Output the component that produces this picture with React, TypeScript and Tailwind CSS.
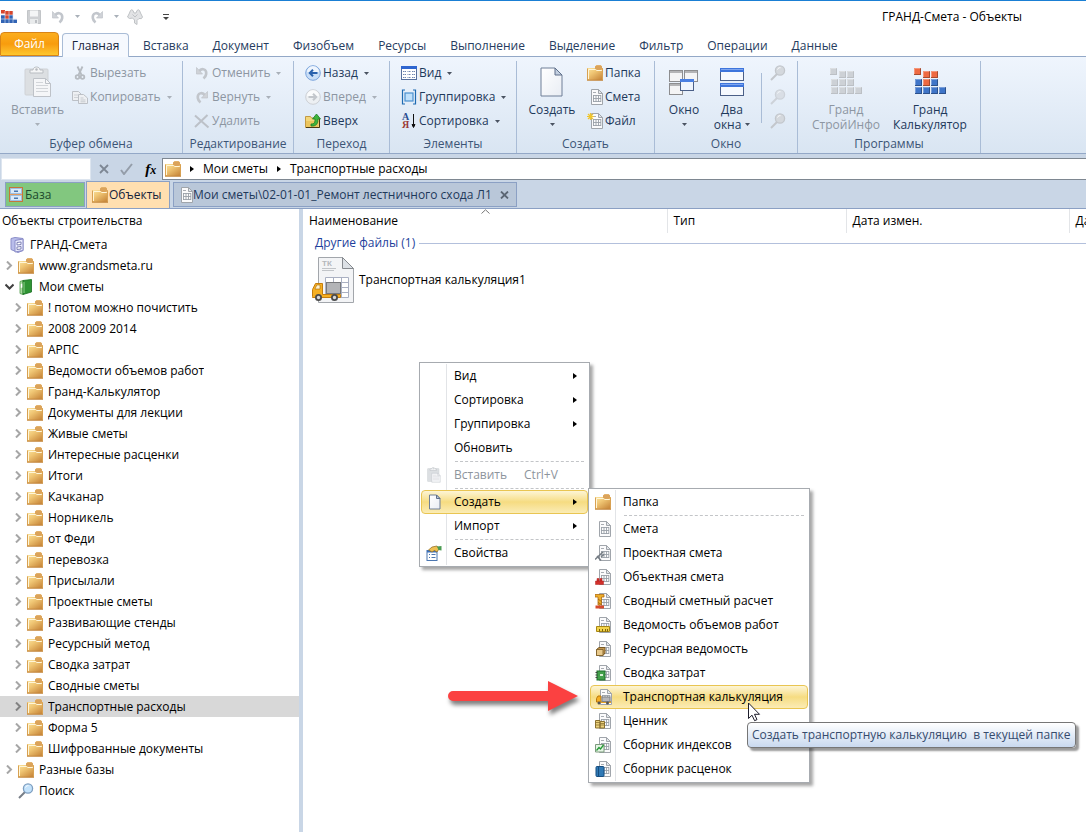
import { useState } from "react";
import type { ReactNode } from "react";

interface IconProps {
    muted?: boolean;
}

interface MenuEntry {
    label: string;
    icon?: ReactNode;
    shortcut?: string;
    submenu?: boolean;
    disabled?: boolean;
    active?: boolean;
    separatorBefore?: boolean;
}

/* ---------- icons ---------- */

const FolderIcon = () => (
    <svg className="shrink-0" width="16" height="16" viewBox="0 0 16 16">
        <defs>
            <linearGradient id="folderFill" x1="0" y1="0" x2="0.7" y2="1">
                <stop offset="0" stopColor="#fdeeb0" />
                <stop offset="0.5" stopColor="#f0c674" />
                <stop offset="1" stopColor="#cb8c3f" />
            </linearGradient>
        </defs>
        <path d="M0 3h8V1.500L9.500.3h4.200L15 1.500V3h1v12.500H0z" fill="url(#folderFill)" />
        <path d="M8 3.500V1.500L9.500.3h4.200L15 1.500v2L13.500 5h-4z" fill="#dba35a" />
        <path d="M1.500 14V4.500h7L9.800 5.500h5" fill="none" stroke="#fff6d8" />
        <path d="M.5 15V3.500M15.500 15V3.500" stroke="#d8a152" />
        <path d="M0 15.200h16" stroke="#bf8239" strokeWidth=".8" />
    </svg>
);

const SheetIcon = ({ children }: { children?: ReactNode }) => (
    <svg className="shrink-0" width="16" height="16" viewBox="0 0 16 16">
        <path d="M4.500.5h7l4 4v11h-11z" fill="#fbfbfc" stroke="#a0a5ab" />
        <path d="M11.500.5v4h4z" fill="#e3e6ea" stroke="#a0a5ab" />
        <path d="M6 3.500h3" stroke="#a9adb3" />
        <path d="M6 6.500h8M6 9.500h8M6 12.500h8M6.500 6v7M9 6v7M11.500 6v7M13.800 6v7" stroke="#9aa0a8" strokeWidth=".9" fill="none" />
        {children}
    </svg>
);

const PageIcon = ({ large }: { large?: boolean }) => (
    <svg className="shrink-0" width={large ? 24 : 12} height={large ? 32 : 16} viewBox="0 0 24 32">
        <defs>
            <linearGradient id="pageFill" x1="0" y1="0" x2="1" y2="1">
                <stop offset="0" stopColor="#ffffff" />
                <stop offset="1" stopColor="#e9edf4" />
            </linearGradient>
        </defs>
        <path d="M1 2h14l7 7v21H1z" fill="url(#pageFill)" stroke="#6f7f97" strokeWidth={large ? 1 : 2} />
        <path d="M15 2v7h7z" fill="#c3cfe0" stroke="#5e6f8a" strokeWidth={large ? 1 : 2} />
    </svg>
);

const PasteIcon = ({ large }: { large?: boolean }) => (
    <svg className="shrink-0" width={large ? 28 : 16} height={large ? 32 : 16} viewBox="0 0 28 32">
        <rect x="1" y="3" width="23" height="26" rx="1" fill="#dcdfe2" stroke="#cfd2d6" />
        <path d="M6 7V4h3c0-4 7-4 7 0h3v3z" fill="#f4f5f6" stroke="#b9bdc2" />
        <circle cx="12.500" cy="3.500" r="1.200" fill="#b4b8bd" />
        <path d="M9.500 12.500h12l5 5V30.500h-17z" fill="#f5f6f8" stroke="#bec2c8" />
        <path d="M21.500 12.500v5h5" fill="none" stroke="#bec2c8" />
        <path d="M12 19.500h12M12 22.500h12M12 25.500h12M12 16.500h7" stroke="#d2d5d9" />
    </svg>
);

const ScissorsIcon = () => (
    <svg className="shrink-0" width="16" height="16" viewBox="0 0 16 16" fill="none" stroke="#b6bbc1" strokeWidth="1.800">
        <path d="M5.500 1.500 9.500 10M10.500 1.500 6.500 10" />
        <circle cx="5.500" cy="12" r="1.800" />
        <circle cx="10.500" cy="12" r="1.800" />
    </svg>
);

const CopyIcon = () => (
    <svg className="shrink-0" width="16" height="16" viewBox="0 0 16 16" fill="#eef0f3" stroke="#bcc0c6">
        <path d="M.5 2.500h6l3 3v6h-9z" />
        <path d="M2 6h4M2 8.500h4" stroke="#cfd2d6" />
        <path d="M6.500 5.500h5l4 3.500v5.500h-9z" />
        <path d="M8.500 9h3M8.500 11h5M8.500 12.800h5" stroke="#c5c9ce" />
    </svg>
);

const UndoIcon = ({ flip }: { flip?: boolean }) => (
    <svg className={flip ? "shrink-0 -scale-x-100" : "shrink-0"} width="14" height="14" viewBox="0 0 14 14">
        <path d="M4 5.500C6.500 1.500 11.800 3 11.200 8c-.2 1.800-1.200 3.200-2.700 4.500" fill="none" stroke="#c2c6cc" strokeWidth="2.600" />
        <path d="M1.500 1.500v6.500h6z" fill="#cfd2d7" stroke="#bfc3c9" strokeWidth=".7" />
    </svg>
);

const CrossIcon = () => (
    <svg className="shrink-0" width="16" height="16" viewBox="0 0 16 16">
        <path d="M1 2.500 14.500 14.500M13.500 2 1 14" stroke="#bcc1c8" strokeWidth="2" />
    </svg>
);

const ArrowCircleIcon = ({ muted }: IconProps) => (
    <svg className={muted ? "shrink-0 -scale-x-100" : "shrink-0"} width="16" height="16" viewBox="0 0 16 16">
        <circle cx="8" cy="8" r="7.300" fill={muted ? "#edf0f3" : "#c9def7"} stroke={muted ? "#cdd0d5" : "#7ba4dc"} />
        <path d="M2 7a6 6 0 0 1 12 0z" fill="#fff" opacity=".7" />
        <path d="M12.500 8H5M8 4.800 4.800 8 8 11.200" fill="none" stroke={muted ? "#c3c7cc" : "#2a62ad"} strokeWidth="2" />
    </svg>
);

const FolderUpIcon = () => (
    <svg className="shrink-0" width="16" height="16" viewBox="0 0 16 16">
        <path d="M.5 3.500h5l1 1.500h8v9.500H.5z" fill="#f3d679" stroke="#c29a45" />
        <path d="M1 8h13l-1 6H1z" fill="#ecc55c" />
        <path d="M14.500 5v9.500H1" fill="none" stroke="#4b3a12" />
        <path d="M6 11c3.500 0 4-1.500 4-5H7.500L11.500 1l4 5H13c0 5-2 7.500-7 7z" fill="#3fb43c" stroke="#1c7d22" strokeWidth=".8" />
    </svg>
);

const ViewIcon = () => (
    <svg className="shrink-0" width="16" height="14" viewBox="0 0 16 14">
        <rect x=".5" y=".5" width="15" height="13" fill="#fff" stroke="#566f9c" />
        <rect x="0" y="0" width="16" height="3" fill="#2f66d0" />
        <path d="M2 5.500h3M2 8.500h3M2 11.500h3M6.500 5.500h3M6.500 8.500h3M6.500 11.500h3M11 5.500h3M11 8.500h3M11 11.500h3" stroke="#6f86b0" strokeDasharray="1 .5 1.500" />
    </svg>
);

const GroupIcon = () => (
    <svg className="shrink-0" width="16" height="16" viewBox="0 0 16 16" fill="none" stroke="#1e6bb2" strokeWidth="1.200">
        <path d="M4 1H1.500v14H4M12 1h2.500v14H12" />
        <rect x="4" y="4" width="8" height="8" fill="#bfe0fb" stroke="#4a90cf" />
    </svg>
);

const SortIcon = () => (
    <svg className="shrink-0" width="16" height="16" viewBox="0 0 16 16">
        <text x="1" y="7" fontSize="10" fontWeight="700" fontFamily="Liberation Serif, serif" fill="#2b4d8f">А</text>
        <text x="1" y="15" fontSize="10" fontWeight="700" fontFamily="Liberation Serif, serif" fill="#9c3a35">Я</text>
        <path d="M12.500 1v13M11 11.500l1.500 3 1.500-3z" stroke="#111" fill="#111" />
    </svg>
);

const WindowsIcon = () => (
    <svg width="32" height="28" viewBox="0 0 32 28">
        <g fill="#f4f4f5" stroke="#8d8d8f">
            <rect x="1.500" y="2.500" width="13" height="11" />
            <rect x="16.500" y="2.500" width="13" height="11" />
            <rect x="1.500" y="15.500" width="13" height="11" />
        </g>
        <path d="M2 4h12M17 4h12M2 17h12" stroke="#b4b4b6" strokeWidth="2" />
        <rect x="12.500" y="11.500" width="13" height="11" fill="#eef4fd" stroke="#4b5f87" />
        <rect x="12" y="11" width="14" height="3" fill="#4a7fe2" />
    </svg>
);

const TwoWindowsIcon = () => (
    <svg width="26" height="30" viewBox="0 0 26 30">
        <g fill="#f6f9fe" stroke="#4b5f87">
            <rect x="1.500" y="1.500" width="23" height="12" />
            <rect x="1.500" y="16.500" width="23" height="12" />
        </g>
        <rect x="1" y="1" width="24" height="4" fill="#3e75dc" />
        <rect x="1" y="16" width="24" height="4" fill="#3e75dc" />
        <path d="M2 2.500h22M2 17.500h22" stroke="#7fa6ef" />
    </svg>
);

const SearchIcon = ({ muted }: IconProps) => (
    <svg className="shrink-0" width="16" height="16" viewBox="0 0 16 16">
        <path d="M7 9 1 15" stroke={muted ? "#c3c7cc" : "#777e87"} strokeWidth="2" />
        <circle cx="10" cy="5.500" r="4.600" fill={muted ? "#d4d8dd" : "#c3e2fb"} stroke={muted ? "#c3c7cc" : "#7d9ec0"} strokeWidth="1.300" />
        <path d="M7.500 4.500c.5-1.500 2-2 3-1.800" stroke="#fff" fill="none" />
    </svg>
);

const CubesIcon = ({ muted }: IconProps) => {
    const red = muted ? "#cdd1d6" : "#ee6a42";
    const blue = muted ? "#cdd1d6" : "#3f75c8";
    const cells: [number, number, string][] = [
        [0, 0, red], [9, 3, red], [17, 3, red],
        [1, 11, blue], [9, 11, red], [17, 11, blue],
        [1, 19, blue], [9, 19, blue], [17, 19, blue], [25, 19, blue],
    ];
    return (
        <svg width="32" height="27" viewBox="0 0 32 27">
            {cells.map(([x, y, fill]) => (
                <g key={`${x}-${y}`}>
                    <rect x={x} y={y} width="7" height="7" fill={fill} />
                    <path d={`M${x} ${y + 6.5}h6.500v-6.500`} fill="none" stroke="#000" opacity={muted ? 0.08 : 0.3} />
                    <path d={`M${x + 0.5} ${y + 6}v-5.500h6`} fill="none" stroke="#fff" opacity="0.3" />
                </g>
            ))}
        </svg>
    );
};

const AppIcon = () => (
    <svg className="shrink-0" width="17" height="16" viewBox="0 0 17 16">
        <path d="M1 1h4v3.500H1zM5 2h4v4H5zM9 2h4v4H9zM5 6h4v4H5z" fill="#d8452b" />
        <path d="M1 6h4v4H1zM9 6h4v4H9zM1 10h4v4H1zM5 10h4v4H5zM9 10h4v4H9zM13 10.500h4V14h-4z" fill="#3264b4" />
        <path d="M1 6h12M1 10h16M5 2v12M9 2v12M13 2v12" stroke="#dfe8f6" strokeWidth=".6" />
    </svg>
);

const SaveIcon = () => (
    <svg width="14" height="14" viewBox="0 0 14 14">
        <path d="M.5.5h13v13h-12l-1-1z" fill="#ced0d3" stroke="#c2c5c8" />
        <path d="M3 .5h8v6H3z" fill="#f4f5f6" />
        <path d="M3 9h8v5H3z" fill="#e9ebec" />
        <path d="M8 10h2v3H8z" fill="#bcbfc3" />
    </svg>
);

const FindFilterIcon = () => (
    <svg width="16" height="16" viewBox="0 0 16 16" fill="#e2e3e5" stroke="#bfc2c5">
        <path d="M3.500 1.500q1-1.500 2.500 0L7 4h2l1-2.500q1.500-1.500 2.500 0L13.500 4 15.500 8q-.5 2.500-3.500 1.500L10 11.500V15.500L7.500 14v-3L5.500 9Q2 10.500.5 8L2.500 4z" />
        <path d="M5.500 5.500 8 8l2.500-2.500" fill="none" />
    </svg>
);

const CabinetIcon = () => (
    <svg className="shrink-0" width="14" height="15" viewBox="0 0 14 15">
        <rect x=".5" y=".5" width="13" height="14" fill="#e39a5c" stroke="#c4763a" />
        <path d="M1.500 1.500h11v5h-11zM1.500 8.500h11v5h-11z" fill="#dbeafa" stroke="#9dbfe2" />
        <path d="M5 3.500h4v1.500H5zM5 10.500h4V12H5z" fill="#4b78ae" />
    </svg>
);

const ServerIcon = () => (
    <svg className="shrink-0" width="14" height="16" viewBox="0 0 14 16">
        <path d="M1 1.500 5 .5l8 1v12l-5 2-7-3z" fill="#b9bdea" stroke="#8a8dc8" />
        <path d="M5 3.500 13 2v11.500l-8 1.500z" fill="#e9eafc" stroke="#8a8dc8" />
        <path d="M7 5.500 11 5v2.500L7 8zM7 10l4-.5V12l-4 .5z" fill="#fff" stroke="#6669a5" strokeWidth=".8" />
    </svg>
);

const GreenBinderIcon = () => (
    <svg className="shrink-0" width="14" height="16" viewBox="0 0 14 16">
        <path d="M1 2.500 4 1.500v14l-3-1z" fill="#aadca0" stroke="#4d9a47" strokeWidth=".8" />
        <path d="M4 1.500 12.500.5v12.500L4 15.500z" fill="#2f9434" stroke="#176d20" strokeWidth=".8" />
        <path d="M5 3v11" stroke="#8fd48b" />
        <path d="M1.800 5l1.500-.5v4l-1.500.5z" fill="#fff" />
    </svg>
);

const PropertiesIcon = () => (
    <svg className="shrink-0" width="16" height="16" viewBox="0 0 16 16">
        <rect x="1" y="5.500" width="10" height="10" fill="#fff" stroke="#4b76b0" />
        <path d="M1 6.500h10" stroke="#3a70bd" strokeWidth="2" />
        <path d="M3 9.500h1M3 12.500h1M5.500 9.500h4M5.500 12.500h4" stroke="#4b76b0" />
        <path d="M2.500 5 6 2l5-1 2 3-2 3-2.500-1.500L6 7z" fill="#eec051" stroke="#8a6420" strokeWidth=".7" />
        <path d="M11 1.500 15.500 1v4.500L12.500 5z" fill="#4b9c52" />
    </svg>
);

const TransportFileIcon = () => (
    <svg className="shrink-0" width="44" height="48" viewBox="0 0 44 48">
        <path d="M7.500 1.500h24l11 11v34h-35z" fill="#f3f4f6" stroke="#a2a6ab" />
        <path d="M31.500 1.500v11h11z" fill="#dce0e5" stroke="#85898e" />
        <text x="11" y="10" fontSize="8" fontWeight="700" fontFamily="Liberation Sans, sans-serif" fill="#b4b7bb">ТК</text>
        <path d="M11 12.500h14M11 14.500h12" stroke="#c1c4c8" />
        <path d="M14.500 21.500h23v20h-23zM14 26.500h24M14 31.500h24M14 36.500h24M22.500 21v20M30.500 21v20" fill="#fff" stroke="#aab0c2" />
        <rect x="15.500" y="26.500" width="14" height="11" fill="#b3b4b7" stroke="#77787b" />
        <path d="M1.500 40.500v-7l3-6h7v11h18v3h-28z" fill="#f5af22" stroke="#c47d0e" />
        <path d="M4 33l1.800-4H9v4z" fill="#fff2cd" stroke="#a6680b" strokeWidth=".6" />
        <g fill="#d8d8d8" stroke="#4c4c4c" strokeWidth="1.800">
            <circle cx="7.500" cy="41.500" r="2.600" />
            <circle cx="23.500" cy="41.500" r="2.600" />
        </g>
    </svg>
);

const DropArrow = ({ muted }: IconProps) => (
    <svg className="shrink-0" width="5" height="3" viewBox="0 0 5 3">
        <path d="M0 0h5L2.500 3z" fill={muted ? "#a9b0b9" : "#4a5361"} />
    </svg>
);

const RightArrow = () => (
    <svg className="shrink-0" width="4" height="6" viewBox="0 0 4 6">
        <path d="M0 0v6l4-3z" fill="#000" />
    </svg>
);

const Chevron = ({ open, dark }: { open?: boolean; dark?: boolean }) => (
    <svg className="shrink-0" width="9" height="9" viewBox="0 0 9 9" fill="none" strokeWidth="2">
        {open ? <path d="M.5 2.500 4.500 6.500 8.500 2.500" stroke="#404040" /> : <path d="M2 .5 6 4.500 2 8.500" stroke={dark ? "#828282" : "#a6a6a6"} />}
    </svg>
);

/* ---------- data ---------- */

const ribbonTabs = ["Вставка", "Документ", "Физобъем", "Ресурсы", "Выполнение", "Выделение", "Фильтр", "Операции", "Данные"];

const folders = [
    "! потом можно почистить",
    "2008 2009 2014",
    "АРПС",
    "Ведомости объемов работ",
    "Гранд-Калькулятор",
    "Документы для лекции",
    "Живые сметы",
    "Интересные расценки",
    "Итоги",
    "Качканар",
    "Норникель",
    "от Феди",
    "перевозка",
    "Присылали",
    "Проектные сметы",
    "Развивающие стенды",
    "Ресурсный метод",
    "Сводка затрат",
    "Сводные сметы",
    "Транспортные расходы",
    "Форма 5",
    "Шифрованные документы",
];

const contextMenu: MenuEntry[] = [
    { label: "Вид", submenu: true },
    { label: "Сортировка", submenu: true },
    { label: "Группировка", submenu: true },
    { label: "Обновить" },
    { label: "Вставить", shortcut: "Ctrl+V", icon: <PasteIcon />, disabled: true, separatorBefore: true },
    { label: "Создать", icon: <PageIcon />, submenu: true, active: true, separatorBefore: true },
    { label: "Импорт", submenu: true },
    { label: "Свойства", icon: <PropertiesIcon />, separatorBefore: true },
];

const createMenu: MenuEntry[] = [
    { label: "Папка", icon: <FolderIcon /> },
    { label: "Смета", icon: <SheetIcon />, separatorBefore: true },
    {
        label: "Проектная смета",
        icon: <SheetIcon><path d="M0 14.500 8 7M2 11l4 4.500M6 12l3-2.500" stroke="#767d85" strokeWidth="1.500" /></SheetIcon>,
    },
    {
        label: "Объектная смета",
        icon: <SheetIcon><path d="M.5 12h8v3.500h-8zM2 9.500h2V12H2zM5 9.500h2V12H5z" fill="#d3302b" stroke="#b02320" strokeWidth=".5" /></SheetIcon>,
    },
    {
        label: "Сводный сметный расчет",
        icon: (
            <SheetIcon>
                <path d="M0 1.500h9V4H6.500v8H3V4H0z" fill="#efb02c" stroke="#b06b10" strokeWidth=".8" />
                <path d="M3 6l3.500 2.500M3 9.500l3.500 2" stroke="#8a5208" strokeWidth=".7" />
                <path d="M.5 12.500h8.500v3H.5z" fill="#d64a2c" />
            </SheetIcon>
        ),
    },
    {
        label: "Ведомость объемов работ",
        icon: <SheetIcon><path d="M1.500 9.500h13v5h-13z" fill="#f2d34a" stroke="#a68615" /><path d="M4.500 12v2.500M7.500 12v2.500M10.500 12v2.500M12.500 12v2.500" stroke="#7c630b" /></SheetIcon>,
    },
    {
        label: "Ресурсная ведомость",
        icon: <SheetIcon><path d="M1.500 8.500 4 6.500h6v5.500l-2 2.500H1.500z" fill="#c49850" stroke="#7a5a26" /><path d="M1.500 8.500H8v6H1.500z" fill="#e8c98b" stroke="#7a5a26" strokeWidth=".8" /></SheetIcon>,
    },
    {
        label: "Сводка затрат",
        icon: <SheetIcon><rect x="2" y="6" width="8" height="9" fill="#43a04b" stroke="#1d6e2a" /><path d="M.5 7.500h2M.5 10h2M.5 12.500h2" stroke="#444" /><path d="M5 9h3v2H5z" fill="#d5f0d3" /></SheetIcon>,
    },
    {
        label: "Транспортная калькуляция",
        active: true,
        icon: (
            <SheetIcon>
                <path d="M.5 13V9.500L2 7h3v6z" fill="#f5af22" stroke="#b8770e" />
                <path d="M5 13h10" stroke="#e5a224" strokeWidth="2" />
                <rect x="6" y="8" width="8" height="4.500" fill="#b5b6ba" stroke="#808286" />
                <circle cx="3" cy="14" r="1.500" fill="#555" />
                <circle cx="11.500" cy="14" r="1.500" fill="#555" />
            </SheetIcon>
        ),
    },
    {
        label: "Ценник",
        icon: <SheetIcon><path d="M.5 7.500h4.500v7.500H.5zM5 8.500h4.500v6.500H5z" fill="#ecd27c" stroke="#8a7030" /><path d="M0 9.500h5M0 12h9.500M5 10.500h5" stroke="#8a7030" strokeWidth=".8" /></SheetIcon>,
    },
    {
        label: "Сборник индексов",
        icon: <SheetIcon><path d="M.5 7.500h8.500v7.500H.5z" fill="#e6f5e5" stroke="#7c9a7d" /><path d="M1.500 13.500 4 10.500l1.500 1.500L8.500 8" fill="none" stroke="#259a36" strokeWidth="1.300" /></SheetIcon>,
    },
    {
        label: "Сборник расценок",
        icon: <SheetIcon><rect x="1" y="5.500" width="8" height="10" rx="1" fill="#2f79b5" stroke="#174e80" /><path d="M3.500 6v9" stroke="#174e80" /></SheetIcon>,
    },
];

/* ---------- building blocks ---------- */

interface SmallButtonProps {
    icon: ReactNode;
    label: string;
    disabled?: boolean;
    drop?: boolean;
}

const SmallButton = ({ icon, label, disabled, drop }: SmallButtonProps) => (
    <button type="button" disabled={disabled} className="flex h-6 items-center text-left text-[#1e395b] disabled:text-[#8d96a2]">
        <span className="mr-0.5 flex w-4 justify-center">{icon}</span>
        <span className="mr-1.5 whitespace-nowrap">{label}</span>
        {drop && <DropArrow muted={disabled} />}
    </button>
);

interface LargeButtonProps {
    icon: ReactNode;
    lines: string[];
    disabled?: boolean;
    drop?: boolean;
}

const LargeButton = ({ icon, lines, disabled, drop }: LargeButtonProps) => (
    <button type="button" disabled={disabled} className="flex flex-col items-center text-[#1e395b] disabled:text-[#8d96a2]">
        <span className="flex h-[41px] items-center">{icon}</span>
        {lines.map((line, i) => (
            <span key={line} className="flex h-[15px] items-center gap-1 whitespace-nowrap leading-[15px]">
                {line}
                {drop && lines.length > 1 && i === lines.length - 1 && <DropArrow />}
            </span>
        ))}
        {drop && lines.length === 1 && (
            <span className="flex h-[15px] items-center">
                <DropArrow muted={disabled} />
            </span>
        )}
    </button>
);

const RibbonGroup = ({ title, className, children }: { title: string; className: string; children: ReactNode }) => (
    <section className={`flex shrink-0 flex-col border-r border-[#a9bcd6] ${className}`}>
        <div className="flex h-[74px] items-start">{children}</div>
        <h2 className="text-center leading-[18px] text-[#3c5576]">{title}</h2>
    </section>
);

const MenuList = ({ items, className }: { items: MenuEntry[]; className: string }) => (
    <div role="menu" className={`absolute border border-[#a7abb0] bg-white p-px shadow-[3px_3px_3px_rgba(0,0,0,0.35)] ${className}`}>
        {items.map((item) => (
            <div key={item.label}>
                {item.separatorBefore && (
                    <div className="flex h-[3px] items-start">
                        <div className="h-[3px] w-[26px] shrink-0 border-r border-[#e2e4e7]" />
                        <div className="ml-2 mr-1 mt-px flex-1 border-t border-dashed border-[#c3c5c8]" />
                    </div>
                )}
                <button
                    type="button"
                    role="menuitem"
                    disabled={item.disabled}
                    className={
                        item.active
                            ? "flex h-6 w-full items-center rounded-sm border border-[#e9c552] bg-linear-to-b from-[#fdf5d5] via-[#f6dc81] to-[#fbecb5] text-left"
                            : "flex h-6 w-full items-center border border-transparent text-left disabled:text-[#8d949c]"
                    }
                >
                    <span className={item.active ? "flex h-6 w-[25px] shrink-0 items-center justify-center" : "flex h-6 w-[25px] shrink-0 items-center justify-center border-r border-[#e2e4e7]"}>
                        {item.icon}
                    </span>
                    <span className="ml-[7px] whitespace-nowrap">{item.label}</span>
                    {item.shortcut && <span className="ml-[17px]">{item.shortcut}</span>}
                    {item.submenu && (
                        <span className="ml-auto mr-2.5">
                            <RightArrow />
                        </span>
                    )}
                </button>
            </div>
        ))}
    </div>
);

interface TreeRowProps {
    label: string;
    level: number;
    icon: ReactNode;
    open?: boolean;
    leaf?: boolean;
    selected?: boolean;
    onSelect?: () => void;
}

const TreeRow = ({ label, level, icon, open, leaf, selected, onSelect }: TreeRowProps) => (
    <li className={selected ? "bg-[#d8d8d8]" : ""}>
        <button
            type="button"
            onClick={onSelect}
            className={`flex h-[21px] w-full items-center text-left ${level === 2 ? "pl-3.5" : level === 1 ? "pl-[5px]" : "-ml-1"}`}
        >
            <span className="flex w-[9px] shrink-0">{!leaf && <Chevron open={open} dark={selected} />}</span>
            <span className="ml-1 mr-[5px] flex w-4 shrink-0 justify-center">{icon}</span>
            <span className="truncate">{label}</span>
        </button>
    </li>
);

/* ---------- page sections ---------- */

const TitleBar = () => (
    <header className="flex h-8 items-center border-t border-[#1a7fd4] bg-white">
        <div className="flex w-[180px] items-center">
            <AppIcon />
            <button type="button" aria-label="Сохранить" className="ml-2.5"><SaveIcon /></button>
            <button type="button" aria-label="Отменить" className="ml-2.5"><UndoIcon /></button>
            <span className="ml-2.5"><DropArrow muted /></span>
            <button type="button" aria-label="Вернуть" className="ml-2.5"><UndoIcon flip /></button>
            <span className="ml-2.5"><DropArrow muted /></span>
            <button type="button" aria-label="Найти" className="ml-2"><FindFilterIcon /></button>
            <button type="button" aria-label="Настройка" className="ml-5">
                <svg width="6" height="6" viewBox="0 0 6 6">
                    <path d="M0 .5h6" stroke="#444" />
                    <path d="M0 3h6L3 6z" fill="#444" />
                </svg>
            </button>
        </div>
        <h1 className="flex-1 pl-[702px] text-black">ГРАНД-Смета - Объекты</h1>
    </header>
);

const RibbonTabs = () => (
    <nav className="flex h-6 items-end bg-white">
        <button type="button" className="h-6 w-[59px] rounded-t-sm border border-[#d98416] bg-linear-to-b from-[#fbae1d] via-[#f89c0d] to-[#fdc72e] text-white">
            Файл
        </button>
        <button type="button" className="z-10 -mb-px ml-[3px] h-6 w-[67px] rounded-t-sm border border-b-0 border-[#a9bcd6] bg-[#f6f9fe] text-[#15233b]">
            Главная
        </button>
        <div className="flex pl-0.5">
            {ribbonTabs.map((tab) => (
                <button key={tab} type="button" className="h-6 px-3 pt-1 text-[#263c60]">
                    {tab}
                </button>
            ))}
        </div>
    </nav>
);

const Ribbon = () => (
    <div className="flex h-[98px] overflow-hidden border-y border-[#93a8c7] bg-linear-to-b from-[#eff5fd] to-[#d9e5f2] pt-1">
        <RibbonGroup title="Буфер обмена" className="w-[183px]">
            <div className="pl-[11px]">
                <LargeButton icon={<PasteIcon large />} lines={["Вставить"]} disabled drop />
            </div>
            <div className="pl-2">
                <SmallButton icon={<ScissorsIcon />} label="Вырезать" disabled />
                <SmallButton icon={<CopyIcon />} label="Копировать" disabled drop />
            </div>
        </RibbonGroup>
        <RibbonGroup title="Редактирование" className="w-[111px]">
            <div className="pl-[11px]">
                <SmallButton icon={<UndoIcon />} label="Отменить" disabled drop />
                <SmallButton icon={<UndoIcon flip />} label="Вернуть" disabled drop />
                <SmallButton icon={<CrossIcon />} label="Удалить" disabled />
            </div>
        </RibbonGroup>
        <RibbonGroup title="Переход" className="w-24">
            <div className="pl-[11px]">
                <SmallButton icon={<ArrowCircleIcon />} label="Назад" drop />
                <SmallButton icon={<ArrowCircleIcon muted />} label="Вперед" disabled drop />
                <SmallButton icon={<FolderUpIcon />} label="Вверх" />
            </div>
        </RibbonGroup>
        <RibbonGroup title="Элементы" className="w-[127px]">
            <div className="pl-[11px]">
                <SmallButton icon={<ViewIcon />} label="Вид" drop />
                <SmallButton icon={<GroupIcon />} label="Группировка" drop />
                <SmallButton icon={<SortIcon />} label="Сортировка" drop />
            </div>
        </RibbonGroup>
        <RibbonGroup title="Создать" className="w-[138px]">
            <div className="flex w-[70px] justify-center">
                <LargeButton icon={<PageIcon large />} lines={["Создать"]} drop />
            </div>
            <div>
                <SmallButton icon={<FolderIcon />} label="Папка" />
                <SmallButton icon={<SheetIcon />} label="Смета" />
                <SmallButton
                    icon={<SheetIcon><path d="M3.500 0v7M0 3.500h7M1 1l5 5M6 1 1 6" stroke="#f0c52c" strokeWidth="1.200" /></SheetIcon>}
                    label="Файл"
                />
            </div>
        </RibbonGroup>
        <RibbonGroup title="Окно" className="w-[143px]">
            <div className="flex w-[58px] justify-center">
                <LargeButton icon={<WindowsIcon />} lines={["Окно"]} drop />
            </div>
            <div className="flex w-[38px] justify-center">
                <LargeButton icon={<TwoWindowsIcon />} lines={["Два", "окна"]} drop />
            </div>
            <div className="ml-2.5 mt-3 h-[50px] w-px bg-[#a9bcd6]" />
            <div className="ml-2">
                <button type="button" aria-label="Увеличить" disabled className="flex h-6 items-center"><SearchIcon muted /></button>
                <button type="button" aria-label="Масштаб 100%" disabled className="flex h-6 items-center opacity-70"><SearchIcon muted /></button>
                <button type="button" aria-label="Уменьшить" disabled className="flex h-6 items-center"><SearchIcon muted /></button>
            </div>
        </RibbonGroup>
        <RibbonGroup title="Программы" className="w-[183px]">
            <div className="flex w-24 justify-center">
                <LargeButton icon={<CubesIcon muted />} lines={["Гранд", "СтройИнфо"]} disabled />
            </div>
            <div className="flex w-[72px] justify-center">
                <LargeButton icon={<CubesIcon />} lines={["Гранд", "Калькулятор"]} />
            </div>
        </RibbonGroup>
    </div>
);

const AddressBar = () => (
    <div className="flex h-[26px] items-end bg-[#c9d6e6]">
        <input aria-label="Ячейка" className="ml-px h-[22px] w-[90px] border border-[#dde5ef] bg-white px-1" />
        <div className="flex h-[22px] w-[71px] items-center justify-around pl-0.5">
            <button type="button" aria-label="Отмена">
                <svg width="10" height="10" viewBox="0 0 10 10"><path d="M1 1l8 8M9 1 1 9" stroke="#7d8794" strokeWidth="1.800" /></svg>
            </button>
            <button type="button" aria-label="Ввод">
                <svg width="13" height="12" viewBox="0 0 13 12"><path d="M1 7l3 4L12 1" fill="none" stroke="#949da9" strokeWidth="2" /></svg>
            </button>
            <button type="button" aria-label="Функция" className="font-['Liberation_Serif',serif] text-[15px] font-bold italic leading-none">
                f<span className="text-[12px]">x</span>
            </button>
        </div>
        <div className="flex h-[22px] flex-1 items-center gap-[9px] border border-r-0 border-[#7e8791] bg-white pl-0.5 text-black">
            <FolderIcon />
            <RightArrow />
            <span>Мои сметы</span>
            <RightArrow />
            <span>Транспортные расходы</span>
        </div>
    </div>
);

const DocumentTabs = () => (
    <div className="flex h-[29px] items-start border-b border-[#8ba0c4] bg-[#c9d6e6] pl-[5px] pt-0.5 text-[#1e395b]">
        <button type="button" className="flex h-[25px] w-20 items-center border border-[#8ba0c4] bg-[#82c77f] pl-[3px] text-[#1d4a2d]">
            <CabinetIcon />
            <span className="ml-0.5">База</span>
        </button>
        <button type="button" className="-mt-px ml-px flex h-[27px] w-[84px] items-center border-x border-t border-[#8ba0c4] bg-[#ffdfb0] pl-[5px] text-[#15233b]">
            <FolderIcon />
            <span className="ml-px">Объекты</span>
        </button>
        <div className="ml-[3px] flex h-[25px] items-center border border-[#8ba0c4] bg-[#b9c7d9] px-[3px]">
            <SheetIcon />
            <button type="button" className="mr-2 whitespace-nowrap">Мои сметы\02-01-01_Ремонт лестничного схода Л1</button>
            <button type="button" aria-label="Закрыть" className="mr-1">
                <svg width="9" height="8" viewBox="0 0 9 8"><path d="M1 .5l7 7M8 .5l-7 7" stroke="#5b6674" strokeWidth="1.800" /></svg>
            </button>
        </div>
    </div>
);

const ObjectTree = () => {
    const [selected, setSelected] = useState("Транспортные расходы");

    return (
        <aside className="w-[303px] shrink-0 border-r-4 border-[#c9d6e6] bg-white">
            <h2 className="h-[25px] pl-0.5 leading-6">Объекты строительства</h2>
            <ul>
                <TreeRow label="ГРАНД-Смета" level={0} icon={<ServerIcon />} leaf />
                <TreeRow label="www.grandsmeta.ru" level={1} icon={<FolderIcon />} />
                <TreeRow label="Мои сметы" level={1} icon={<GreenBinderIcon />} open />
                {folders.map((name) => (
                    <TreeRow
                        key={name}
                        label={name}
                        level={2}
                        icon={<FolderIcon />}
                        selected={name === selected}
                        onSelect={() => setSelected(name)}
                    />
                ))}
                <TreeRow label="Разные базы" level={1} icon={<FolderIcon />} />
                <TreeRow label="Поиск" level={1} icon={<SearchIcon />} leaf />
            </ul>
        </aside>
    );
};

const FileList = () => (
    <table className="w-full table-fixed border-collapse">
        <thead>
            <tr className="h-6 text-left">
                <th className="relative w-[364px] border-r border-[#e3e5e8] pl-1.5 font-normal">
                    Наименование
                    <svg className="absolute left-[178px] top-0" width="9" height="5" viewBox="0 0 9 5">
                        <path d="M.5 4.500 4.500.8l4 3.700" fill="none" stroke="#777" />
                    </svg>
                </th>
                <th className="w-[179px] border-r border-[#e3e5e8] pl-1.5 font-normal">Тип</th>
                <th className="w-[223px] border-r border-[#e3e5e8] pl-1.5 font-normal">Дата измен.</th>
                <th className="overflow-hidden whitespace-nowrap pl-1.5 font-normal">Дата</th>
            </tr>
        </thead>
        <tbody>
            <tr>
                <td colSpan={4} className="h-5 pl-3 text-[#1e3f9c]">
                    <div className="flex items-center gap-1">
                        Другие файлы (1)
                        <span className="h-px flex-1 bg-[#b3c0dc]" />
                    </div>
                </td>
            </tr>
            <tr>
                <td colSpan={4} className="h-[54px] pl-2">
                    <div className="flex items-center gap-1">
                        <TransportFileIcon />
                        Транспортная калькуляция1
                    </div>
                </td>
            </tr>
        </tbody>
    </table>
);

const PointerArrow = () => (
    <svg className="absolute left-[143px] top-[469px] drop-shadow-[2px_4px_2px_rgba(0,0,0,0.5)]" width="134" height="36" viewBox="0 0 134 36">
        <path d="M7 13h95V3l30 15-30 15V23H7a5 5 0 0 1 0-10z" fill="#fb4141" />
    </svg>
);

const App = () => {
    return (
        <div className="flex min-h-screen flex-col overflow-hidden bg-white font-['Open_Sans','Noto_Sans',sans-serif] text-[12px] leading-4 text-black">
            <TitleBar />
            <RibbonTabs />
            <Ribbon />
            <AddressBar />
            <DocumentTabs />
            <div className="flex flex-1">
                <ObjectTree />
                <main className="relative min-w-0 flex-1 bg-white">
                    <FileList />
                    <PointerArrow />
                    <MenuList items={contextMenu} className="left-[116px] top-[153px] w-[171px]" />
                    <MenuList items={createMenu} className="left-[285px] top-[279px] w-[222px]" />
                    <div
                        role="tooltip"
                        className="absolute left-[444px] top-[513px] whitespace-nowrap rounded-sm border border-[#767676] bg-linear-to-b from-white to-[#c9d9ef] px-1 py-1 text-[#364b6d] shadow-[3px_3px_2px_rgba(0,0,0,0.4)]"
                    >
                        Создать транспортную калькуляцию&nbsp; в текущей папке
                    </div>
                    <svg className="absolute left-[445px] top-[493px]" width="13" height="20" viewBox="0 0 13 20">
                        <path d="M.5 1v15.500l3.500-3.300 2.600 5.500 2.400-1.100-2.500-5.300h5z" fill="#fff" stroke="#1d1d2b" />
                    </svg>
                </main>
            </div>
        </div>
    );
};

export default App;
